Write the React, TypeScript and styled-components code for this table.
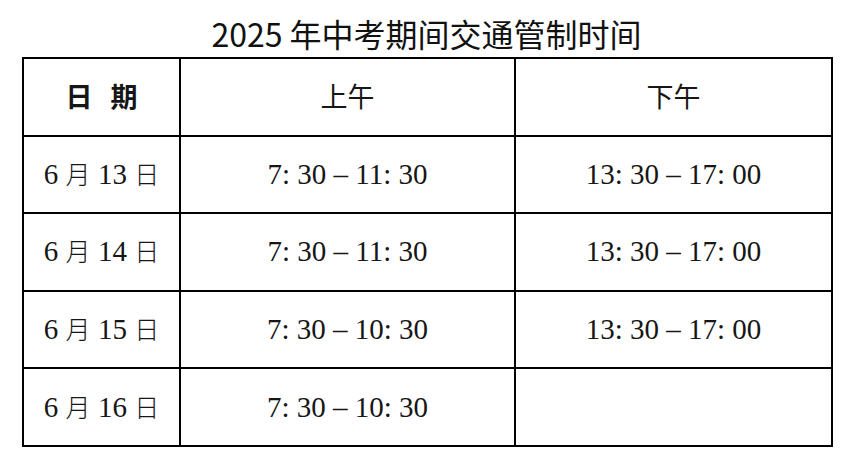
import styled, { createGlobalStyle } from 'styled-components'

const GlobalStyle = createGlobalStyle`
    html, body {
        margin: 0;
        padding: 0;
        background: #ffffff;
    }
    body {
        width: 845px;
        height: 465px;
        overflow: hidden;
    }
`

const Page = styled.div`
    padding: 13px 14px 0 22px;
    width: 809px;
`

const Title = styled.h1`
    margin: 0 0 3px 0;
    height: 41px;
    line-height: 41px;
    text-align: center;
    font-family: "Noto Sans CJK SC", "Noto Sans", sans-serif;
    font-size: 32px;
    font-weight: 400;
    color: #111;
`

const Table = styled.table`
    width: 809px;
    border-collapse: collapse;
    table-layout: fixed;
    border: 2px solid #000;
`

const Row = styled.tr`
    height: 77.6px;
`

const Cell = styled.td`
    border: 2px solid #000;
    padding: 0;
    text-align: center;
    vertical-align: middle;
    color: #161616;
    font-family: "Liberation Serif", "Noto Sans CJK SC", serif;
    font-size: 29px;
    line-height: 1;
    white-space: pre;
`

const HeadText = styled.span<{ $bold?: boolean }>`
    font-family: "Noto Sans CJK SC", sans-serif;
    font-size: 27px;
    font-weight: ${p => (p.$bold ? 700 : 400)};
    word-spacing: ${p => (p.$bold ? '12px' : '0')};
`

const Han = styled.span`
    font-family: "Noto Sans CJK SC", sans-serif;
    font-size: 25px;
    font-weight: 300;
`

const rows = [
    { day: '13', am: '7: 30 – 11: 30', pm: '13: 30 – 17: 00' },
    { day: '14', am: '7: 30 – 11: 30', pm: '13: 30 – 17: 00' },
    { day: '15', am: '7: 30 – 10: 30', pm: '13: 30 – 17: 00' },
    { day: '16', am: '7: 30 – 10: 30', pm: '' },
]

export default function App() {
    return (
        <>
            <GlobalStyle />
            <Page>
                <Title>2025 年中考期间交通管制时间</Title>
                <Table>
                    <colgroup>
                        <col style={{ width: 157 }} />
                        <col style={{ width: 335 }} />
                        <col style={{ width: 317 }} />
                    </colgroup>
                    <tbody>
                        <Row>
                            <Cell><HeadText $bold>日 期</HeadText></Cell>
                            <Cell><HeadText>上午</HeadText></Cell>
                            <Cell><HeadText>下午</HeadText></Cell>
                        </Row>
                        {rows.map(r => (
                            <Row key={r.day}>
                                <Cell>6 <Han>月</Han> {r.day} <Han>日</Han></Cell>
                                <Cell>{r.am}</Cell>
                                <Cell>{r.pm}</Cell>
                            </Row>
                        ))}
                    </tbody>
                </Table>
            </Page>
        </>
    )
}
